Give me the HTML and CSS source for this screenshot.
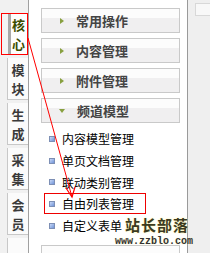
FILE: index.html
```html
<!DOCTYPE html>
<html>
<head>
<meta charset="utf-8">
<link rel="stylesheet" href="styles.css">
</head>
<body>
<div class="frame">
  <div class="side">
    <div class="tab active"><span>核</span><span>心</span></div>
    <div class="tab"><span>模</span><span>块</span></div>
    <div class="tab"><span>生</span><span>成</span></div>
    <div class="tab"><span>采</span><span>集</span></div>
    <div class="tab"><span>会</span><span>员</span></div>
    <div class="tab"></div>
  </div>
  <div class="main">
    <div class="bar"><i class="arr right"></i><b>常用操作</b></div>
    <div class="bar"><i class="arr right"></i><b>内容管理</b></div>
    <div class="bar"><i class="arr right"></i><b>附件管理</b></div>
    <div class="bar"><i class="arr down"></i><b>频道模型</b></div>
    <ul class="list">
      <li><i class="dot"></i>内容模型管理</li>
      <li><i class="dot"></i>单页文档管理</li>
      <li><i class="dot"></i>联动类别管理</li>
      <li class="mark"><i class="dot"></i>自由列表管理</li>
      <li><i class="dot"></i>自定义表单</li>
    </ul>
    <div class="bar last"></div>
  </div>
  <div class="scroll"><div class="btn"></div></div>
</div>
<svg class="anno" width="210" height="253" viewBox="0 0 210 253">
  <line x1="28" y1="38" x2="72" y2="197" stroke="#f00" stroke-width="1"/>
  <polyline points="66,188 72,197 75,187" fill="none" stroke="#f00" stroke-width="1.2"/>
</svg>
<div class="wm">
  <div class="wm1">站长部落</div>
  <div class="wm2">www.zzblo.com</div>
</div>
</body>
</html>
```
FILE: styles.css
```css
html, body { margin: 0; padding: 0; }
body {
  width: 210px; height: 253px; overflow: hidden; position: relative;
  background: #fff;
  font-family: "Noto Sans CJK SC", "Liberation Sans", sans-serif;
}
.frame { display: flex; height: 253px; overflow: hidden; }
.side {
  width: 29px; flex: none;
  background: #f1f1f1;
  border-right: 1px solid #a0a0a0;
  display: flex; flex-direction: column; gap: 3px;
  padding-top: 13px; box-sizing: border-box; overflow: hidden;
}
.tab {
  margin-left: 7px; width: 21px; height: 42px; flex: none;
  box-sizing: border-box;
  background: #fbfbfb;
  border-left: 1px solid #c8c8c8;
  border-bottom: 1px solid #c8c8c8;
  display: flex; flex-direction: column; align-items: center; justify-content: center;
  font-size: 13px; font-weight: bold; color: #3a3a3a; line-height: 19px;
}
.tab.active {
  margin-left: 1px; width: 27px;
  border: 1px solid #f00;
  background: linear-gradient(to right, #f4f4f4 0, #f4f4f4 6px, #a8a8a8 6px, #a8a8a8 9px, #fdfdfd 9px);
  color: #3c4d00; padding-left: 8px;
}
.main { width: 158px; flex: none; padding-top: 8px; box-sizing: border-box; overflow: hidden; }
.bar {
  margin-left: 12px; width: 139px; height: 25px; box-sizing: border-box;
  border: 1px solid #c9c9c9;
  background: linear-gradient(#fcfcfc 0, #fcfcfc 40%, #f0eff0 40%, #f0eff0 100%);
  display: flex; align-items: center;
  margin-bottom: 5px;
}
.bar b { font-size: 13px; color: #444; margin-left: 12px; }
.arr { width: 0; height: 0; margin-left: 18px; display: block; }
.arr.right { border-left: 4px solid #88a040; border-top: 3px solid transparent; border-bottom: 3px solid transparent; }
.arr.down { border-top: 4px solid #88a040; border-left: 3px solid transparent; border-right: 3px solid transparent; margin-left: 17px; }
.list { list-style: none; margin: 1px 0 0 0; padding: 0; }
.list li {
  height: 21.7px; display: flex; align-items: center;
  font-size: 12px; color: #000; padding-left: 20px; position: relative;
}
.dot {
  width: 4px; height: 4px; display: block; margin-right: 7px;
  border: 1px solid #7d8fb5;
  background: linear-gradient(135deg, #c9d8f6, #6f93d8);
}
.list li.mark::after {
  content: ""; position: absolute; left: 15px; top: 0; width: 100px; height: 19px;
  border: 1px solid #e00;
}
.bar.last { margin-top: 9px; }
.scroll {
  flex: 1; border-left: 1px solid #9a9a9a;
  background: #efefef;
  padding: 3px 0 0 7px; box-sizing: border-box;
}
.btn {
  height: 11px; border: 1px solid #d8d8d8; border-right: none;
  background: #f8f8f8;
}
.anno { position: absolute; left: 0; top: 0; pointer-events: none; }
.wm { position: absolute; left: 115px; top: 214px; width: 82px; }
.wm1 {
  font-family: "Noto Sans CJK SC", serif; font-weight: bold; font-size: 15px; line-height: 22px;
  color: #3b3a20; letter-spacing: 1px; text-shadow: 0 0 2px #fff8c0, 0 0 2px #fff8c0;
  margin-left: 10px;
}
.wm2 {
  font-family: "Liberation Mono", monospace; font-weight: bold; font-size: 10px; line-height: 11px;
  color: #333; text-shadow: 0 0 2px #fff8c0; white-space: nowrap;
}
```
